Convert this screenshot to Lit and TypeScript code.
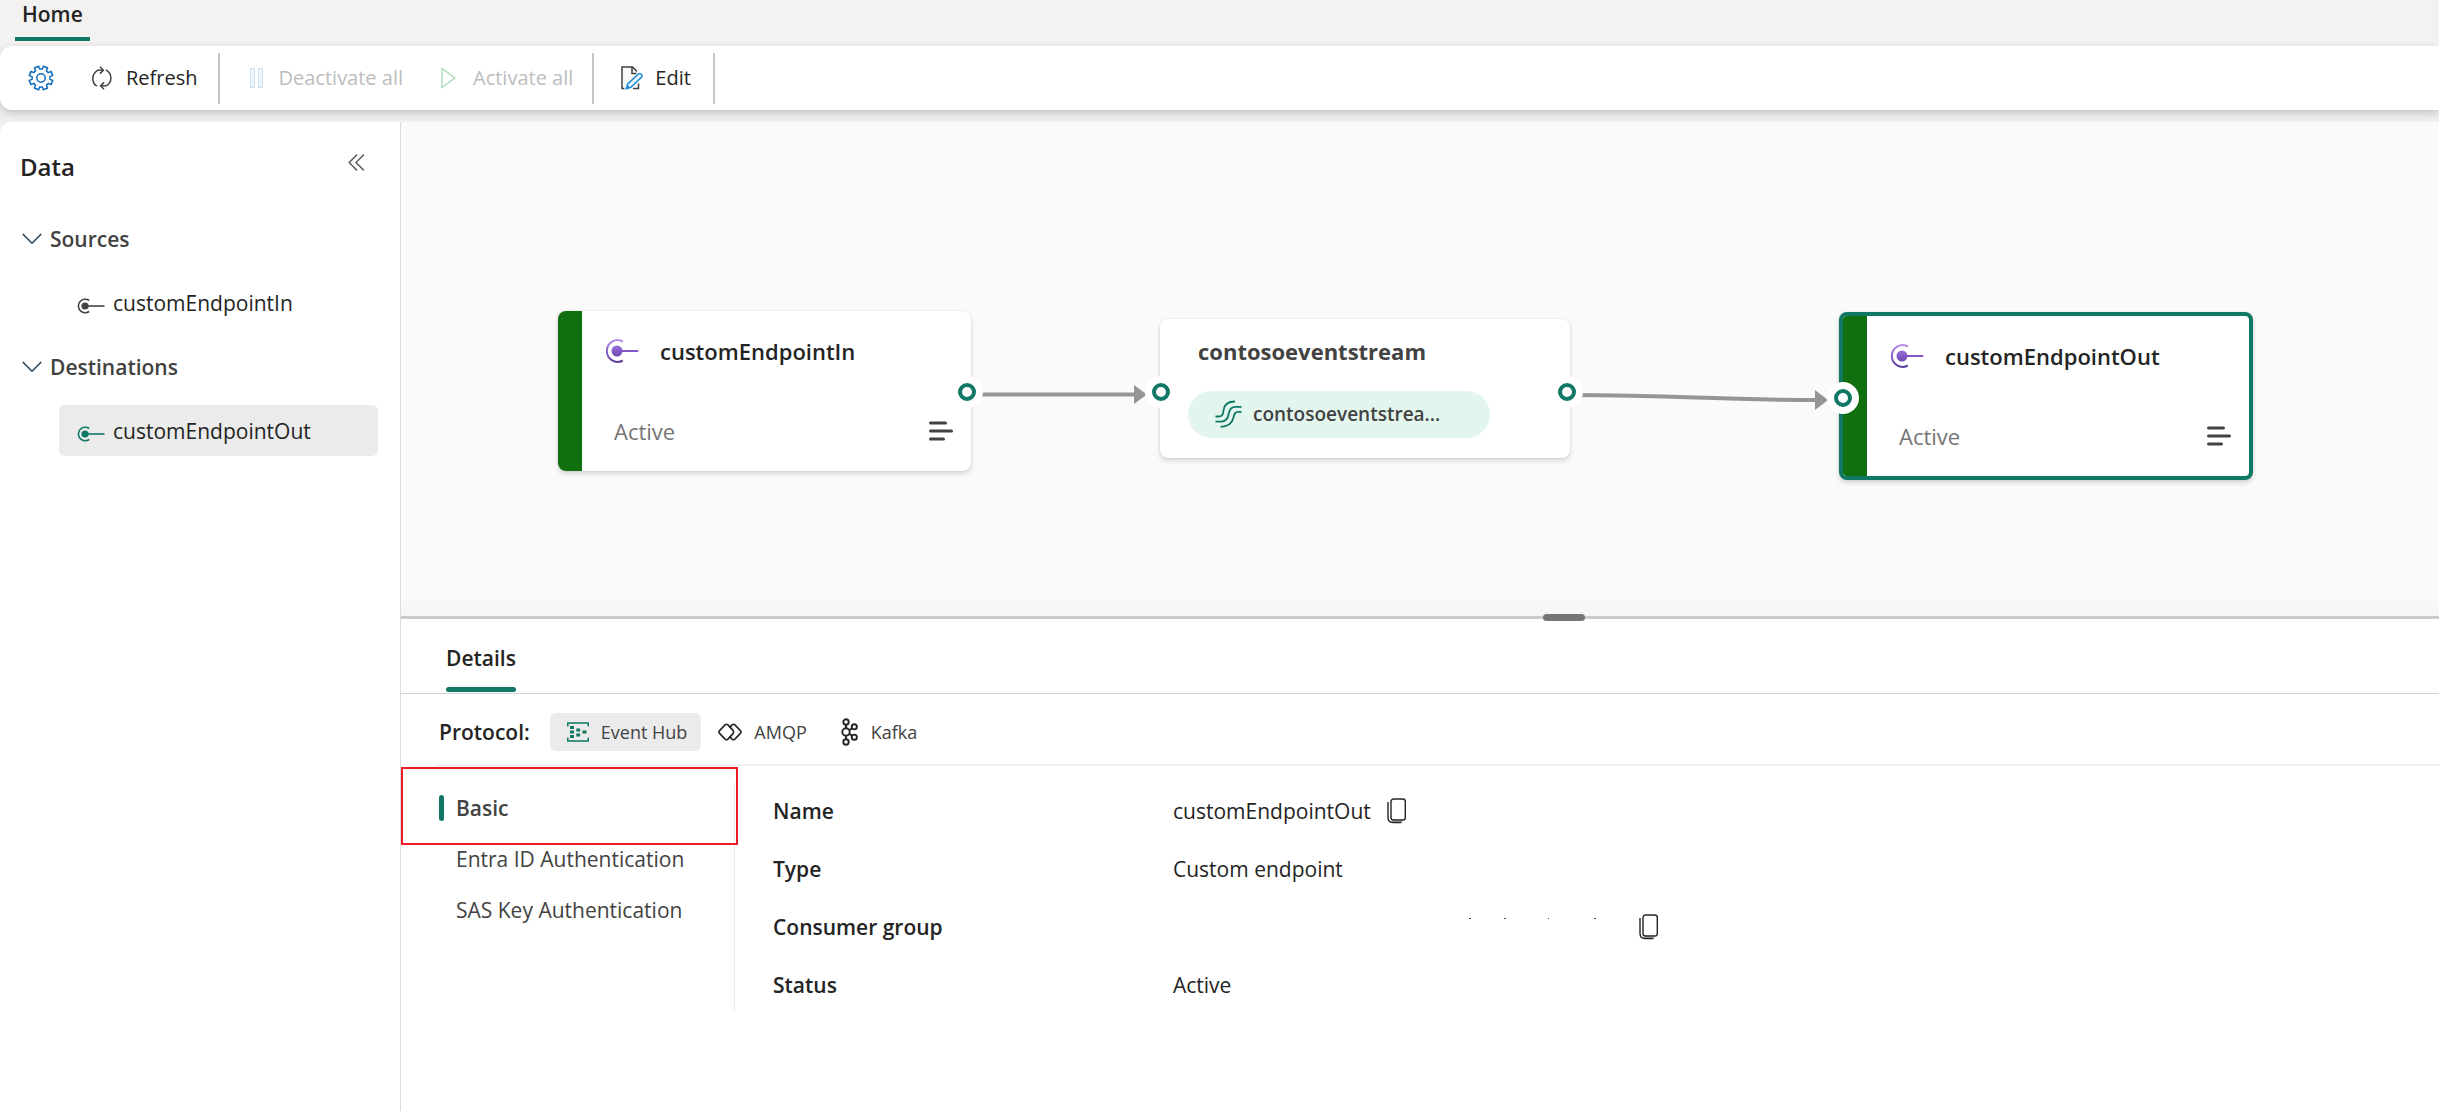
import { LitElement, html, css, svg, nothing } from "lit";
import { customElement, property, state } from "lit/decorators.js";
import { classMap } from "lit/directives/class-map.js";
import { styleMap } from "lit/directives/style-map.js";

const shared = css`
  * {
    box-sizing: border-box;
  }
  button {
    appearance: none;
    border: 0;
    margin: 0;
    padding: 0;
    background: none;
    color: inherit;
    font: inherit;
    text-align: left;
    cursor: pointer;
  }
  svg {
    display: block;
    flex: none;
  }
  h1,
  h2,
  h3,
  p,
  ul {
    margin: 0;
    padding: 0;
    list-style: none;
  }
`;

/* ---------- icons ---------- */

const gearPath = (() => {
  const teeth = 8;
  const pts: string[] = [];
  const at = (r: number, deg: number) => {
    const a = (deg * Math.PI) / 180;
    return `${(13 + r * Math.sin(a)).toFixed(2)} ${(13 - r * Math.cos(a)).toFixed(2)}`;
  };
  for (let i = 0; i < teeth; i++) {
    const c = (i * 360) / teeth + 22.5;
    pts.push(at(9, c - 14), at(12, c - 11), at(12, c + 11), at(9, c + 14));
  }
  return `M${pts.join("L")}Z`;
})();

const gearIcon = svg`<svg width="26" height="26" viewBox="0 0 26 26" fill="none" stroke="#0f6cbd" stroke-width="1.5" stroke-linejoin="round">
  <path d=${gearPath}/><circle cx="13" cy="13" r="4.2"/></svg>`;

const refreshIcon = svg`<svg width="20" height="24" viewBox="0 0 20 24" fill="none" stroke="#424242" stroke-width="1.5">
  <path d="M6 4.2C-1 8 -.5 17 5 20.2"/><path d="M5.6 4.2H11"/><path d="M8 .8l3.4 3.4L8 7.6"/>
  <path d="M14 3.8C20.5 7.5 20.5 16.5 14 19.8"/><path d="M14.4 19.8H9"/><path d="M12 16.4l-3.4 3.4 3.4 3.4"/></svg>`;

const pauseIcon = svg`<svg width="13" height="20" viewBox="0 0 13 20" fill="#eff6fc" stroke="#c7e0f4" stroke-width="1">
  <rect x=".5" y=".5" width="4" height="19"/><rect x="8.5" y=".5" width="4" height="19"/></svg>`;

const playIcon = svg`<svg width="16" height="22" viewBox="0 0 16 22" fill="none" stroke="#a8d8b4" stroke-width="1.3">
  <path d="M1 1.5v19L14 11z"/></svg>`;

const editIcon = svg`<svg width="22" height="24" viewBox="0 0 22 24" fill="none">
  <path d="M1 22.500V1.200h10.500l5.500 5.500v2.600L7.500 18.500 6 22.500z" fill="#fafafa"/>
  <path d="M3.500 22.500H1V1H11.500L16 5.500M11 1v6.500h4.500M12 22.500h5.500v-5" stroke="#424242" stroke-width="1.5"/>
  <path d="M5.200 22.900l1.500-5L17.200 8.200c1.100-1 2.600-.6 3.300.2s.8 2-.2 3L10 21.300z" fill="#eaf6fd" stroke="#1e8bd6" stroke-width="1.5" stroke-linejoin="round"/>
  <path d="M5.200 22.900l1.300-4 2.800 2.700z" fill="#1e8bd6"/></svg>`;

const collapseIcon = svg`<svg width="17" height="17" viewBox="0 0 17 17" fill="none" stroke="#616161" stroke-width="1.5">
  <path d="M9 .6L1.200 8.500 9 16.400M15.800 .6L8 8.500l7.800 7.900"/></svg>`;

const chevronIcon = svg`<svg width="20" height="12" viewBox="0 0 20 12" fill="none" stroke="#33475b" stroke-width="1.6">
  <path d="M.8 1L10 10.200 19.200 1"/></svg>`;

const plugIcon = (color: string) => svg`<svg width="28" height="16" viewBox="0 0 28 16" fill="none">
  <path d="M12.200 2.500A6.800 6.800 0 1 0 12.200 13.500" stroke=${color} stroke-width="1.6"/>
  <circle cx="8" cy="8" r="3.600" fill=${color}/><path d="M8 8H27.500" stroke=${color} stroke-width="1.6"/></svg>`;

const endpointIcon = svg`<svg width="34" height="24" viewBox="0 0 34 24" fill="none">
  <defs><linearGradient id="ring" x1="0" y1="0" x2="0" y2="1"><stop offset="0" stop-color="#b38aec"/><stop offset="1" stop-color="#5c3f9e"/></linearGradient>
  <linearGradient id="dot" x1="0" y1="0" x2="0" y2="1"><stop offset="0" stop-color="#9a6fdb"/><stop offset="1" stop-color="#6f4bb2"/></linearGradient></defs>
  <path d="M17.800 2.500A10.800 10.800 0 1 0 17.800 21.500" stroke="url(#ring)" stroke-width="2"/>
  <circle cx="12" cy="12" r="5.500" fill="url(#dot)"/><rect x="12" y="11" width="21.500" height="2" rx="1" fill="#8256c8"/></svg>`;

const linesIcon = svg`<svg width="24" height="20" viewBox="0 0 24 20" stroke="#424242" stroke-width="3" stroke-linecap="round">
  <path d="M1.500 2H16.500M1.500 10H22.500M1.500 18H14.500"/></svg>`;

const streamIcon = svg`<svg width="27" height="28" viewBox="0 0 27 28" fill="none" stroke="#117865" stroke-width="1.8">
  <path d="M20 1.500C12.500 1.500 9 5.500 8.500 10.500C8 15 7 16.500 3.500 16.500H.5"/>
  <path d="M26.500 6.800H20.500C16 6.800 14.500 9.500 13.800 13.500C13 19 10.500 21.700 5.500 21.700H.5"/>
  <path d="M26.500 11.800H23.500C20 11.800 19.500 13.500 18.500 17.500C17 24 12.500 26.800 5.500 26.800"/></svg>`;

const hubIcon = svg`<svg width="22" height="20" viewBox="0 0 22 20" fill="#117865">
  <path d="M.8 4.500V1H21.200V4.500M.8 15.500V19H21.200V15.500" fill="none" stroke="#117865" stroke-width="1.5"/>
  <path d="M3 4h4v3H3zM3 8.500h4v3H3zM3 13h4v3H3zM9.300 6.500h3.800v3H9.300zM9.300 11.500h3.800v3H9.300zM15.500 8.500h4v3h-4z"/></svg>`;

const amqpIcon = svg`<svg width="24" height="18" viewBox="0 0 24 18" fill="none" stroke="#242424" stroke-width="1.6" stroke-linejoin="round">
  <path d="M7.300 1.600L1.600 7.600a2 2 0 0 0 0 2.800l5.700 6q1.200.8 2.400 0l5.300-5.800q1.200-1.600 0-3.200L9.700 1.600q-1.200-.8-2.400 0z"/>
  <path d="M11.500 4.600l2.800-3q1.200-.8 2.400 0l5.700 6a2 2 0 0 1 0 2.800l-5.700 6q-1.200.8-2.400 0l-2.800-3"/></svg>`;

const kafkaIcon = svg`<svg width="18" height="28" viewBox="0 0 18 28" fill="none" stroke="#242424" stroke-width="1.9">
  <circle cx="5" cy="4" r="2.700"/><circle cx="5" cy="14" r="3.700"/><circle cx="5" cy="24" r="2.700"/>
  <circle cx="13.300" cy="8.800" r="2.600"/><circle cx="13.300" cy="19.200" r="2.600"/>
  <path d="M5 6.700v3.600M5 17.700v3.600M8.300 12.200l2.700-2M8.300 15.800l2.700 2"/></svg>`;

const copyIcon = svg`<svg width="20" height="26" viewBox="0 0 20 26" fill="none" stroke="#242424" stroke-width="1.4">
  <path d="M4.500 23.300h11" stroke="#b5b5b5" stroke-width="1.4"/>
  <rect x="4" y="1" width="14.300" height="21" rx="2.600"/>
  <path d="M1 4v15.500q0 5 5 5h8.500"/></svg>`;

/* ---------- toolbar ---------- */

@customElement("es-toolbar")
export class EsToolbar extends LitElement {
  static styles = [
    shared,
    css`
      :host {
        display: block;
      }
      .tabs {
        height: 46px;
        padding: 0 15px;
        display: flex;
        background: #f3f2f1;
      }
      .tab {
        height: 41px;
        padding: 0 7px 12px;
        border-bottom: 4px solid #117865;
        font-weight: 600;
        font-size: 21px;
        line-height: 28px;
      }
      .bar {
        position: relative;
        display: flex;
        align-items: center;
        height: 64px;
        padding: 0 20px;
        border-radius: 12px 0 0 12px;
        background: #fff;
        box-shadow: 0 3px 9px rgba(0, 0, 0, 0.2);
      }
      .cmd {
        display: flex;
        align-items: center;
        gap: 14px;
        height: 48px;
        padding: 0 8px;
        font-size: 20px;
        line-height: 28px;
      }
      .refresh {
        margin-left: 22px;
      }
      .wide {
        gap: 16px;
        padding: 0 19px;
      }
      .pause {
        padding-left: 30px;
      }
      .cmd:disabled {
        color: #bdbdbd;
        cursor: default;
      }
      .edit {
        gap: 12px;
        padding: 0 22px 0 27px;
      }
      .rule {
        width: 2px;
        height: 51px;
        background: #c8c6c4;
      }
      .first {
        margin-left: 12px;
      }
    `,
  ];

  render() {
    return html`
      <nav class="tabs"><button class="tab">Home</button></nav>
      <div class="bar" role="toolbar">
        <button class="cmd" aria-label="Settings">${gearIcon}</button>
        <button class="cmd refresh">${refreshIcon}Refresh</button>
        <span class="rule first"></span>
        <button class="cmd wide pause" disabled>${pauseIcon}Deactivate all</button>
        <button class="cmd wide" disabled>${playIcon}Activate all</button>
        <span class="rule"></span>
        <button class="cmd edit">${editIcon}Edit</button>
        <span class="rule"></span>
      </div>
    `;
  }
}

/* ---------- data pane ---------- */

interface Group {
  title: string;
  items: string[];
}

@customElement("es-data-pane")
export class EsDataPane extends LitElement {
  @property() selected = "";

  private groups: Group[] = [
    { title: "Sources", items: ["customEndpointIn"] },
    { title: "Destinations", items: ["customEndpointOut"] },
  ];

  static styles = [
    shared,
    css`
      :host {
        display: block;
        padding: 25px 22px 0 20px;
        border-right: 1px solid #dcdcdc;
        border-radius: 12px 0 0 0;
        background: #fff;
      }
      .head {
        display: flex;
        justify-content: space-between;
        margin-bottom: 38px;
        padding-right: 13px;
      }
      .title {
        font-size: 24px;
        line-height: 40px;
        font-weight: 600;
      }
      .collapse {
        align-self: flex-start;
        padding-top: 7px;
      }
      .group {
        display: flex;
        align-items: center;
        gap: 8px;
        height: 28px;
        padding-left: 2px;
        line-height: 28px;
        font-weight: 600;
        color: #424242;
      }
      .items {
        padding: 24px 0 25px 39px;
      }
      .item {
        display: flex;
        align-items: center;
        gap: 8px;
        width: 100%;
        height: 51px;
        padding: 0 18px;
        border-radius: 6px;
        line-height: 28px;
      }
      .item svg {
        margin-top: 6px;
      }
      .active {
        background: #ebebeb;
      }
    `,
  ];

  render() {
    return html`
      <div class="head">
        <h2 class="title">Data</h2>
        <button class="collapse" aria-label="Collapse pane">${collapseIcon}</button>
      </div>
      ${this.groups.map(
        (g) => html`
          <button class="group" aria-expanded="true">${chevronIcon}${g.title}</button>
          <ul class="items">
            ${g.items.map(
              (name) => html`<li>
                <button class=${classMap({ item: true, active: name === this.selected })}>
                  ${plugIcon(name === this.selected ? "#117865" : "#424242")}${name}
                </button>
              </li>`,
            )}
          </ul>
        `,
      )}
    `;
  }
}

/* ---------- canvas ---------- */

interface CanvasNode {
  kind: "endpoint" | "stream";
  name: string;
  x: number;
  y: number;
  selected?: boolean;
}

@customElement("es-canvas")
export class EsCanvas extends LitElement {
  private nodes: CanvasNode[] = [
    { kind: "endpoint", name: "customEndpointIn", x: 157, y: 189 },
    { kind: "stream", name: "contosoeventstream", x: 759, y: 197 },
    { kind: "endpoint", name: "customEndpointOut", x: 1438, y: 190, selected: true },
  ];

  private ports = [
    { x: 566, y: 270 },
    { x: 760, y: 270 },
    { x: 1166, y: 270 },
    { x: 1442, y: 276 },
  ];

  static styles = [
    shared,
    css`
      :host {
        display: block;
        position: relative;
        overflow: hidden;
        background: linear-gradient(#fafafa calc(100% - 20px), #f5f5f5);
      }
      .edges,
      .node,
      .port {
        position: absolute;
      }
      .edges {
        left: 0;
        top: 0;
      }
      .node {
        border-radius: 8px;
        background: #fff;
        box-shadow: 0 0 2px rgba(0, 0, 0, 0.12), 0 3px 5px rgba(0, 0, 0, 0.14);
      }
      .endpoint {
        width: 413px;
        height: 160px;
        display: grid;
        grid-template-columns: 24px 1fr;
        overflow: hidden;
      }
      .selected {
        width: 414px;
        height: 168px;
        border: 4px solid #117865;
      }
      .strip {
        background: #107010;
      }
      .body {
        display: flex;
        flex-direction: column;
        justify-content: space-between;
        padding: 24px 18px 24px 23px;
      }
      .row {
        display: flex;
        align-items: center;
        gap: 21px;
      }
      .name {
        font-size: 22px;
        line-height: 32px;
        font-weight: 600;
        color: #242424;
      }
      .foot {
        display: flex;
        justify-content: space-between;
        align-items: center;
        padding-left: 9px;
        font-size: 22px;
        line-height: 32px;
        color: #757575;
      }
      .stream {
        width: 410px;
        height: 139px;
        padding: 16px 26px 0 28px;
      }
      .stream .name {
        padding-left: 10px;
        font-weight: 700;
        color: #424242;
      }
      .pill {
        display: flex;
        align-items: center;
        gap: 11px;
        width: 302px;
        height: 47px;
        margin-top: 24px;
        padding: 0 27px 2px;
        border-radius: 24px;
        background: #e3f6ee;
        color: #424242;
        font-size: 19px;
        line-height: 28px;
        font-weight: 600;
      }
      .port {
        width: 32px;
        height: 32px;
        margin: -16px 0 0 -16px;
        padding: 7px;
        border-radius: 50%;
        background: #fff;
      }
      .ring {
        width: 18px;
        height: 18px;
        border: 4px solid #117865;
        border-radius: 50%;
      }
    `,
  ];

  private endpoint(n: CanvasNode) {
    return html`<div
      class=${classMap({ node: true, endpoint: true, selected: !!n.selected })}
      style=${styleMap({ left: `${n.x}px`, top: `${n.y}px` })}
    >
      <span class="strip"></span>
      <div class="body">
        <div class="row">${endpointIcon}<h3 class="name">${n.name}</h3></div>
        <div class="foot">
          Active<button aria-label="Node menu">${linesIcon}</button>
        </div>
      </div>
    </div>`;
  }

  private stream(n: CanvasNode) {
    return html`<div class="node stream" style=${styleMap({ left: `${n.x}px`, top: `${n.y}px` })}>
      <h3 class="name">${n.name}</h3>
      <div class="pill">${streamIcon}<span>contosoeventstrea...</span></div>
    </div>`;
  }

  render() {
    return html`
      <svg class="edges" width="1500" height="494" fill="none" stroke="#979593" stroke-width="4">
        <path d="M566 272.500H738" />
        <path d="M1166 273C1290 273 1300 278 1420 278" />
        <path d="M733 263l13 9.500-13 9.500zM1414 268l13 10-13 10z" fill="#979593" stroke="none" />
      </svg>
      ${this.nodes.map((n) => (n.kind === "endpoint" ? this.endpoint(n) : this.stream(n)))}
      ${this.ports.map(
        (p) =>
          html`<div class="port" style=${styleMap({ left: `${p.x}px`, top: `${p.y}px` })}>
            <div class="ring"></div>
          </div>`,
      )}
    `;
  }
}

/* ---------- details ---------- */

@customElement("es-details")
export class EsDetails extends LitElement {
  @state() private protocol = "Event Hub";
  @state() private section = "Basic";

  private protocols = [
    { name: "Event Hub", icon: hubIcon },
    { name: "AMQP", icon: amqpIcon },
    { name: "Kafka", icon: kafkaIcon },
  ];
  private sections = ["Basic", "Entra ID Authentication", "SAS Key Authentication"];
  private rows = [
    { label: "Name", value: "customEndpointOut", copy: true },
    { label: "Type", value: "Custom endpoint" },
    { label: "Consumer group", value: "", masked: true, copy: true },
    { label: "Status", value: "Active" },
  ];

  static styles = [
    shared,
    css`
      :host {
        display: block;
        position: relative;
        border-top: 3px solid #cacaca;
        background: #fff;
      }
      .grip {
        position: absolute;
        top: -5px;
        left: calc(50% + 123px);
        width: 42px;
        height: 7px;
        border-radius: 4px;
        background: #757575;
      }
      .tabs {
        display: flex;
        height: 75px;
        padding: 25px 45px 1px;
        border-bottom: 1px solid #d1d1d1;
      }
      .tab {
        padding: 0;
        display: flex;
        flex-direction: column;
        justify-content: space-between;
        font-weight: 600;
        line-height: 28px;
      }
      .tab::after {
        content: "";
        height: 5px;
        border-radius: 3px;
        background: #117865;
      }
      .protocols {
        display: flex;
        align-items: center;
        height: 72px;
        margin-left: 35px;
        padding: 6px 3px 0;
        border-bottom: 2px solid #f0f0f0;
      }
      .label {
        margin-right: 20px;
        font-weight: 600;
      }
      .proto {
        display: flex;
        align-items: center;
        gap: 12px;
        height: 38px;
        padding: 0 17px;
        border-radius: 6px;
        font-size: 18px;
        line-height: 28px;
        color: #424242;
      }
      .on {
        padding-right: 14px;
        background: #ebebeb;
      }
      .content {
        display: grid;
        grid-template-columns: 334px 1fr;
        padding: 16px 0 100px;
        align-items: start;
      }
      .sections {
        height: 230px;
        padding: 0 0 0 36px;
        border-right: 1px solid #ebebeb;
        display: flex;
        flex-direction: column;
      }
      .section {
        display: flex;
        align-items: center;
        gap: 12px;
        height: 51px;
        padding-left: 19px;
        color: #424242;
        line-height: 28px;
      }
      .current {
        padding-left: 2px;
        font-weight: 600;
      }
      .current::before {
        content: "";
        width: 5px;
        height: 26px;
        border-radius: 3px;
        background: #117865;
      }
      .callout {
        position: absolute;
        top: 148px;
        left: 0;
        width: 337px;
        height: 78px;
        border: 2px solid #ed1c24;
        pointer-events: none;
      }
      .props {
        border-collapse: collapse;
        margin-left: 38px;
      }
      .props th {
        width: 400px;
        height: 58px;
        padding: 0;
        text-align: left;
        font-weight: 600;
      }
      .props td {
        padding: 0;
        line-height: 28px;
      }
      .value {
        display: flex;
        align-items: center;
        gap: 16px;
      }
      .masked {
        width: 450px;
        height: 28px;
      }
    `,
  ];

  render() {
    return html`
      <div class="grip" role="separator"></div>
      <div class="tabs"><button class="tab">Details</button></div>
      <div class="protocols">
        <span class="label">Protocol:</span>
        ${this.protocols.map(
          (p) => html`<button
            class=${classMap({ proto: true, on: p.name === this.protocol })}
            @click=${() => (this.protocol = p.name)}
          >
            ${p.icon}${p.name}
          </button>`,
        )}
      </div>
      <div class="content">
        <nav class="sections">
          ${this.sections.map(
            (s) => html`<button
              class=${classMap({ section: true, current: s === this.section })}
              @click=${() => (this.section = s)}
            >
              ${s}
            </button>`,
          )}
        </nav>
        <table class="props">
          ${this.rows.map(
            (r) => html`<tr>
              <th scope="row">${r.label}</th>
              <td>
                <div class="value">
                  ${r.masked
                    ? html`<svg class="masked" viewBox="0 0 450 28" fill="#424242">
                        <path d="M296 5h2v1h-2zM331 5h2v1h-2zM375 5h1v1h-1zM421 5h2v1h-2z" />
                      </svg>`
                    : r.value}
                  ${r.copy ? html`<button aria-label="Copy ${r.label}">${copyIcon}</button>` : nothing}
                </div>
              </td>
            </tr>`,
          )}
        </table>
      </div>
      <div class="callout"></div>
    `;
  }
}

/* ---------- page ---------- */

@customElement("app-root")
export class AppRoot extends LitElement {
  static styles = [
    shared,
    css`
      :host {
        display: flex;
        flex-direction: column;
        min-height: 100vh;
        background: #f0f0f0;
        color: #242424;
        font-family: "Open Sans", "Noto Sans", sans-serif;
        font-size: 21px;
        line-height: 28px;
      }
      .main {
        flex: 1;
        display: grid;
        grid-template-columns: 401px minmax(0, 1fr);
        margin-top: 12px;
      }
      .work {
        display: grid;
        grid-template-rows: minmax(494px, 1fr) auto;
      }
      .panel {
        min-height: 495px;
      }
    `,
  ];

  render() {
    return html`
      <es-toolbar></es-toolbar>
      <main class="main">
        <es-data-pane selected="customEndpointOut"></es-data-pane>
        <div class="work">
          <es-canvas></es-canvas>
          <es-details class="panel"></es-details>
        </div>
      </main>
    `;
  }
}
